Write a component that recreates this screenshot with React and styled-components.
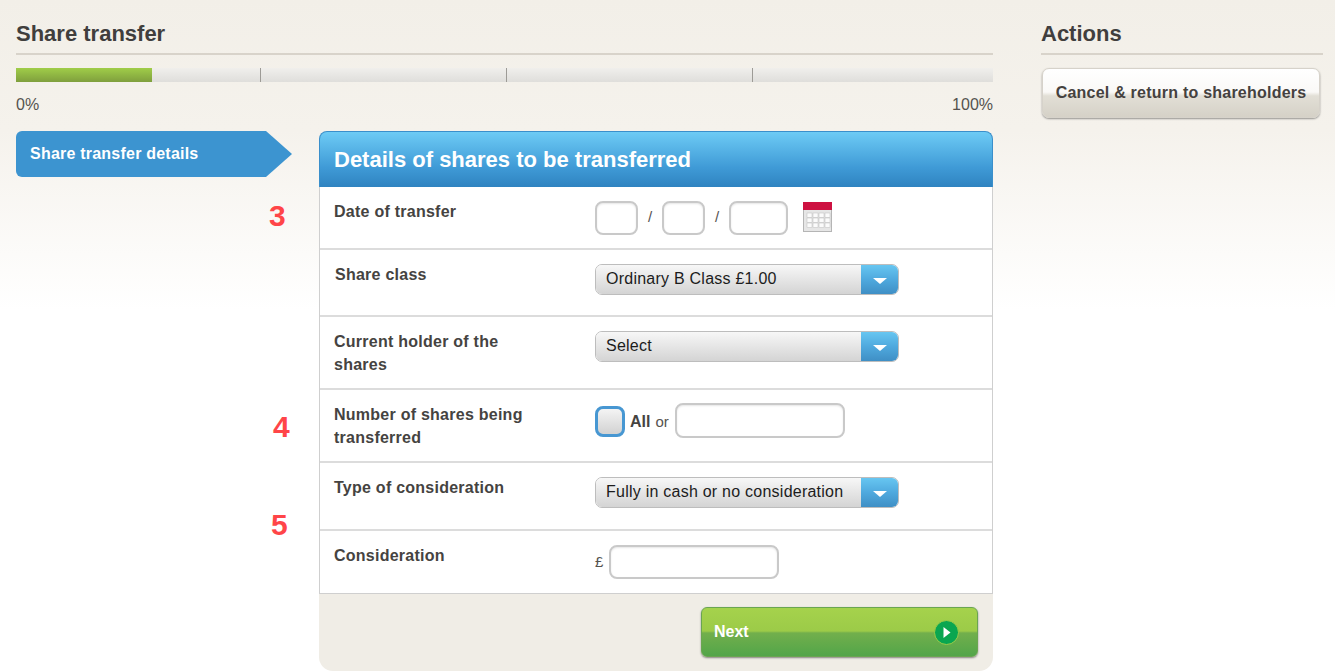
import React from "react";
import styled, { createGlobalStyle } from "styled-components";

const GlobalStyle = createGlobalStyle`
  html, body {
    margin: 0;
    padding: 0;
    height: 100%;
  }
  body {
    font-family: "Liberation Sans", Arial, sans-serif;
    background: #fff;
    overflow: hidden;
  }
`;

const Page = styled.div`
  display: flex;
  gap: 48px;
  width: 1335px;
  height: 671px;
  padding-left: 16px;
  box-sizing: border-box;
  overflow: hidden;
  background: linear-gradient(to bottom, #f2efe8 0, #f5f2ec 130px, #ffffff 310px);
`;

const Main = styled.main`
  display: flex;
  flex-direction: column;
  width: 977px;
`;

const Side = styled.aside`
  display: flex;
  flex-direction: column;
  width: 282px;
`;

const Heading = styled.h1`
  flex: none;
  margin: 0;
  height: 55px;
  padding-top: 20px;
  box-sizing: border-box;
  border-bottom: 2px solid #d8d3ca;
  font-size: 22px;
  line-height: 27px;
  font-weight: 700;
  color: #403e3d;
`;

const Track = styled.div`
  flex: none;
  display: flex;
  position: relative;
  height: 14px;
  margin-top: 13px;
  background: linear-gradient(to bottom, #f0efec, #dfdedb);
`;

const Fill = styled.div`
  height: 100%;
  background: linear-gradient(to bottom, #a0cd49, #7f9f3d);
`;

const Tick = styled.span`
  position: absolute;
  top: 0;
  bottom: 0;
  width: 1px;
  background: #9d9b96;
`;

const Scale = styled.div`
  flex: none;
  display: flex;
  justify-content: space-between;
  margin-top: 14px;
  font-size: 16px;
  line-height: 18px;
  color: #55534f;
`;

const Columns = styled.div`
  flex: none;
  display: flex;
  align-items: flex-start;
  gap: 27px;
  margin-top: 17px;
`;

const Step = styled.div`
  display: flex;
  align-items: center;
  flex: none;
  width: 276px;
  height: 46px;
  padding-left: 14px;
  box-sizing: border-box;
  background: #3c94d0;
  color: #fff;
  font-size: 16px;
  font-weight: 700;
  letter-spacing: 0.22px;
  border-radius: 6px 0 0 6px;
  clip-path: polygon(0 0, 250px 0, 100% 50%, 250px 100%, 0 100%);
`;

const Panel = styled.section`
  flex: none;
  width: 674px;
  border-radius: 8px 8px 14px 14px;
  background: #f0ede6;
`;

const PanelHeader = styled.h2`
  margin: 0;
  height: 56px;
  padding-left: 14px;
  box-sizing: border-box;
  display: flex;
  align-items: center;
  border-radius: 8px 8px 0 0;
  border: 1px solid #3a8fcb;
  border-bottom: 0;
  background: linear-gradient(to bottom, #6dcbf5 0, #3f9ad6 65%, #2f83c0 100%);
  color: #fff;
  font-size: 22px;
  font-weight: 700;
`;

const Rows = styled.div`
  background: #fff;
  border: 1px solid #cfcfcf;
  border-top: 0;
`;

const Row = styled.div`
  position: relative;
  display: grid;
  grid-template-columns: 275px 1fr;
  height: ${(p) => p.$height}px;
  box-sizing: border-box;
  border-bottom: 2px solid #dcdcdc;
  &:last-child {
    border-bottom: 0;
  }
`;

const Label = styled.div`
  padding: 13px 60px 0 ${(p) => p.$left ?? 14}px;
  font-size: 16px;
  line-height: 23px;
  font-weight: 700;
  letter-spacing: 0.25px;
  color: #454341;
`;

const Controls = styled.div`
  display: flex;
  align-items: flex-start;
  padding-top: ${(p) => p.$top}px;
`;

const Marker = styled.span`
  position: absolute;
  left: ${(p) => p.$left}px;
  top: ${(p) => p.$top}px;
  font-size: 30px;
  line-height: 34px;
  font-weight: 700;
  color: #ff4548;
`;

const TextBox = styled.div`
  width: ${(p) => p.$width}px;
  height: ${(p) => p.$height}px;
  box-sizing: border-box;
  background: #fff;
  border: 2px solid #c9c9c9;
  border-radius: 8px;
  box-shadow: inset 0 1px 2px rgba(0, 0, 0, 0.1);
`;

const Slash = styled.span`
  width: 24px;
  text-align: center;
  font-size: 15px;
  line-height: 32px;
  color: #55534f;
`;

const Select = styled.div`
  display: flex;
  width: 304px;
  height: 31px;
  box-sizing: border-box;
  border: 1px solid #bdbdbd;
  border-radius: 7px;
  overflow: hidden;
  font-size: 16px;
  letter-spacing: 0.24px;
  color: #1c1c1c;
`;

const SelectText = styled.span`
  flex: 1;
  padding-left: 10px;
  line-height: 27px;
  background: linear-gradient(to bottom, #f7f7f7, #d4d4d4);
`;

const SelectArrow = styled.span`
  display: flex;
  align-items: center;
  justify-content: center;
  width: 37px;
  background: linear-gradient(to bottom, #67c6f1 0, #4fa9de 50%, #3f8fc5 100%);
  &::after {
    content: "";
    border-left: 7px solid transparent;
    border-right: 7px solid transparent;
    border-top: 6px solid #fff;
    margin-top: 2px;
  }
`;

const Checkbox = styled.div`
  width: 30px;
  height: 31px;
  margin-top: 3px;
  box-sizing: border-box;
  border: 3px solid #4797d2;
  border-radius: 8px;
  background: linear-gradient(to bottom, #f4f4f4, #d2d2d2);
`;

const AllLabel = styled.span`
  margin-left: 5px;
  font-size: 16px;
  font-weight: 700;
  line-height: 37px;
  color: #454341;
`;

const OrLabel = styled.span`
  margin: 0 6px 0 5px;
  font-size: 15px;
  line-height: 37px;
  color: #55534f;
`;

const Pound = styled.span`
  width: 14px;
  font-size: 15px;
  line-height: 34px;
  color: #55534f;
`;

const Footer = styled.div`
  display: flex;
  justify-content: flex-end;
  padding: 13px 15px 14px 0;
`;

const NextButton = styled.button`
  display: flex;
  align-items: center;
  justify-content: space-between;
  width: 277px;
  height: 50px;
  padding: 0 18px 0 12px;
  box-sizing: border-box;
  border: 1px solid #6aa551;
  border-radius: 6px;
  background: linear-gradient(to bottom, #a5d24c 0, #9ccb48 48%, #72af4c 52%, #52a549 100%);
  box-shadow: 0 1px 2px rgba(0, 0, 0, 0.45);
  color: #fff;
  font-family: inherit;
  font-size: 16px;
  font-weight: 700;
`;

const CancelButton = styled.button`
  flex: none;
  width: 278px;
  height: 50px;
  margin: 13px 0 0 1px;
  padding: 0;
  border: 1px solid #d6d2ca;
  border-radius: 7px;
  background: linear-gradient(to bottom, #ffffff 0, #faf9f7 48%, #e2dfd6 56%, #d5d1c7 100%);
  box-shadow: 0 1px 2px rgba(0, 0, 0, 0.4);
  color: #45423f;
  font-family: inherit;
  font-size: 16px;
  font-weight: 700;
  letter-spacing: 0.23px;
`;

const CalendarSvg = styled.svg`
  margin: 1px 0 0 15px;
`;

function CalendarIcon() {
  return (
    <CalendarSvg width="30" height="31" viewBox="0 0 30 31">
      <rect x="0.5" y="0.5" width="28" height="29" fill="#e6e6e6" stroke="#b5b5b5" />
      <rect x="0" y="0" width="29" height="8" fill="#cd1141" />
      <g fill="#fbfbfb" stroke="#bdbdbd" strokeWidth="0.5">
        {[11, 16, 21].map((y) =>
          [4, 10, 16, 22].map((x) => (
            <rect key={`${x}-${y}`} x={x} y={y} width="5" height="4.5" />
          ))
        )}
      </g>
    </CalendarSvg>
  );
}

function PlayIcon() {
  return (
    <svg width="25" height="25" viewBox="0 0 25 25">
      <circle cx="12.5" cy="12.5" r="12" fill="#0aa650" stroke="#9ccb48" strokeWidth="1" />
      <path d="M9.5 7 L16.5 12.5 L9.5 18 Z" fill="#fff" />
    </svg>
  );
}

function Dropdown({ value }) {
  return (
    <Select>
      <SelectText>{value}</SelectText>
      <SelectArrow />
    </Select>
  );
}

export default function App() {
  return (
    <>
      <GlobalStyle />
      <Page>
        <Main>
          <Heading>Share transfer</Heading>
          <Track>
            <Fill style={{ width: 136 }} />
            <Tick style={{ left: 244 }} />
            <Tick style={{ left: 490 }} />
            <Tick style={{ left: 736 }} />
          </Track>
          <Scale>
            <span>0%</span>
            <span>100%</span>
          </Scale>
          <Columns>
            <Step>Share transfer details</Step>
            <Panel>
              <PanelHeader>Details of shares to be transferred</PanelHeader>
              <Rows>
                <Row $height={63}>
                  <Marker $left={-51} $top={12}>3</Marker>
                  <Label>Date of transfer</Label>
                  <Controls $top={14}>
                    <TextBox $width={43} $height={34} />
                    <Slash>/</Slash>
                    <TextBox $width={43} $height={34} />
                    <Slash>/</Slash>
                    <TextBox $width={59} $height={34} />
                    <CalendarIcon />
                  </Controls>
                </Row>
                <Row $height={67}>
                  <Label $left={15}>Share class</Label>
                  <Controls $top={14}>
                    <Dropdown value="Ordinary B Class £1.00" />
                  </Controls>
                </Row>
                <Row $height={73}>
                  <Label>Current holder of the shares</Label>
                  <Controls $top={14}>
                    <Dropdown value="Select" />
                  </Controls>
                </Row>
                <Row $height={73}>
                  <Marker $left={-47} $top={20}>4</Marker>
                  <Label>Number of shares being transferred</Label>
                  <Controls $top={13}>
                    <Checkbox />
                    <AllLabel>All</AllLabel>
                    <OrLabel>or</OrLabel>
                    <TextBox $width={170} $height={35} />
                  </Controls>
                </Row>
                <Row $height={68}>
                  <Marker $left={-49} $top={45}>5</Marker>
                  <Label>Type of consideration</Label>
                  <Controls $top={14}>
                    <Dropdown value="Fully in cash or no consideration" />
                  </Controls>
                </Row>
                <Row $height={62}>
                  <Label>Consideration</Label>
                  <Controls $top={14}>
                    <Pound>£</Pound>
                    <TextBox $width={170} $height={34} />
                  </Controls>
                </Row>
              </Rows>
              <Footer>
                <NextButton>
                  Next
                  <PlayIcon />
                </NextButton>
              </Footer>
            </Panel>
          </Columns>
        </Main>
        <Side>
          <Heading>Actions</Heading>
          <CancelButton>Cancel &amp; return to shareholders</CancelButton>
        </Side>
      </Page>
    </>
  );
}
